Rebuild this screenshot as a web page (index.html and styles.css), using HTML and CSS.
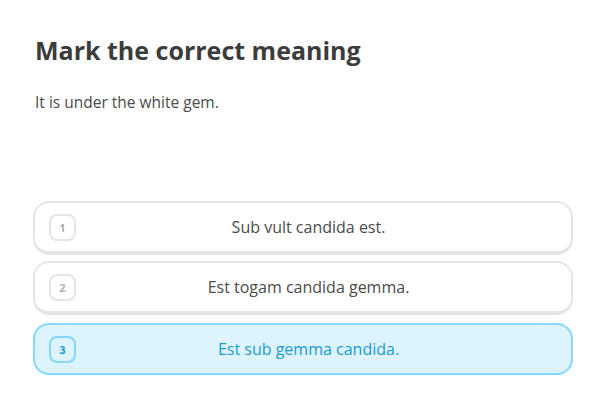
FILE: index.html
```html
<!DOCTYPE html>
<html>
<head>
<meta charset="utf-8">
<link rel="stylesheet" href="styles.css">
</head>
<body>
<div class="page">
  <h1 class="title">Mark the correct meaning</h1>
  <p class="prompt">It is under the white gem.</p>
  <div class="choices">
    <div class="choice"><span class="key">1</span><span class="label">Sub vult candida est.</span></div>
    <div class="choice"><span class="key">2</span><span class="label">Est togam candida gemma.</span></div>
    <div class="choice selected"><span class="key">3</span><span class="label">Est sub gemma candida.</span></div>
  </div>
</div>
</body>
</html>
```
FILE: styles.css
```css
html, body {
  margin: 0;
  padding: 0;
  background: #ffffff;
}
.page {
  width: 608px;
  height: 410px;
  box-sizing: border-box;
  padding: 34px 35px 0 33px;
  font-family: "Open Sans", "Noto Sans", sans-serif;
  color: #4b4b4b;
}
.title {
  margin: 0 0 0 2px;
  font-size: 25px;
  line-height: 32px;
  font-weight: 700;
  color: #3c3c3c;
}
.prompt {
  margin: 26px 0 0 2px;
  font-size: 15.5px;
  line-height: 20px;
}
.choices {
  margin-top: 89px;
  display: flex;
  flex-direction: column;
  gap: 6px;
}
.choice {
  height: 54px;
  box-sizing: border-box;
  border: 2px solid #e5e5e5;
  border-bottom-width: 4px;
  border-radius: 16px;
  background: #fff;
  display: flex;
  align-items: center;
  padding: 0 30px 0 14px;
}
.choice.selected {
  height: 52px;
  margin-top: 2px;
  border-color: #84d8ff;
  border-bottom-width: 2px;
  background: #ddf4ff;
}
.key {
  width: 27px;
  height: 27px;
  box-sizing: border-box;
  border: 2px solid #e5e5e5;
  border-radius: 8px;
  display: flex;
  align-items: center;
  justify-content: center;
  font-size: 11px;
  font-weight: 700;
  color: #afafaf;
}
.selected .key {
  border-color: #84d8ff;
  color: #1899d6;
}
.label {
  flex: 1;
  text-align: center;
  font-size: 16px;
  color: #4b4b4b;
}
.selected .label {
  color: #1899d6;
}
```
